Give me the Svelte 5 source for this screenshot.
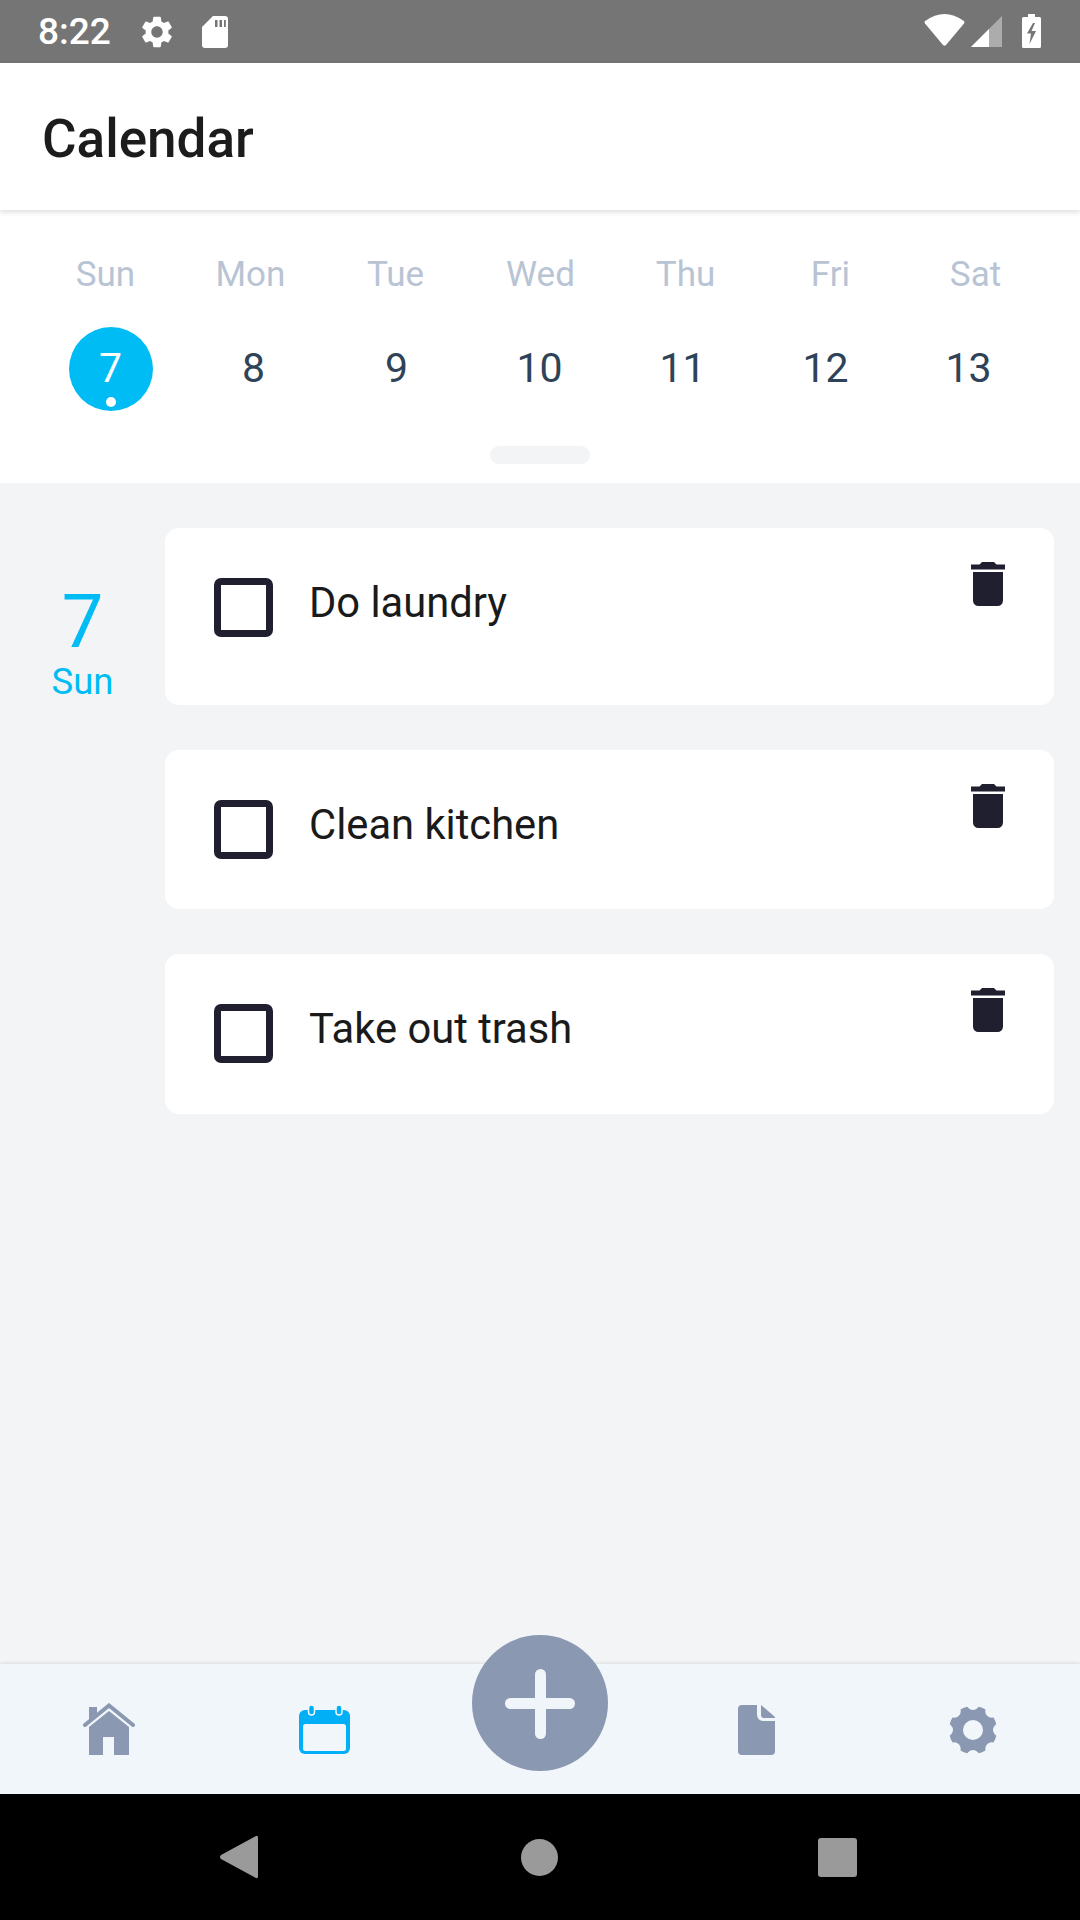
<script>
  const names = ['Sun', 'Mon', 'Tue', 'Wed', 'Thu', 'Fri', 'Sat'];
  const dates = [7, 8, 9, 10, 11, 12, 13];
  const tasks = ['Do laundry', 'Clean kitchen', 'Take out trash'];
  const notches = [0, 45, 90, 135, 180, 225, 270, 315];
  const gear = 'M19.14 12.94c.04-.3.06-.61.06-.94 0-.32-.02-.64-.07-.94l2.03-1.58c.18-.14.23-.41.12-.61l-1.92-3.32c-.12-.22-.37-.29-.59-.22l-2.39.96c-.5-.38-1.03-.7-1.62-.94l-.36-2.54c-.04-.24-.24-.41-.48-.41h-3.84c-.24 0-.43.17-.47.41l-.36 2.54c-.59.24-1.13.57-1.62.94l-2.39-.96c-.22-.08-.47 0-.59.22L2.74 8.87c-.12.21-.08.47.12.61l2.03 1.58c-.05.3-.09.63-.09.94s.02.64.07.94l-2.03 1.58c-.18.14-.23.41-.12.61l1.92 3.32c.12.22.37.29.59.22l2.39-.96c.5.38 1.03.7 1.62.94l.36 2.54c.05.24.24.41.48.41h3.84c.24 0 .44-.17.47-.41l.36-2.54c.59-.24 1.13-.56 1.62-.94l2.39.96c.22.08.47 0 .59-.22l1.92-3.32c.12-.22.07-.47-.12-.61l-2.01-1.58zM12 15.6c-1.98 0-3.6-1.62-3.6-3.6s1.62-3.6 3.6-3.6 3.6 1.62 3.6 3.6-1.62 3.6-3.6 3.6z';
</script>

<div class="screen">
  <div class="status">
    <span class="time">8:22</span>
    <svg class="st-gear" width="38" height="38" viewBox="0 0 24 24"><path fill="#fff" d={gear} /></svg>
    <svg class="st-sd" width="26" height="32" viewBox="0 0 26 32">
      <path fill="#fff" d="M11 0H23a3 3 0 0 1 3 3V29a3 3 0 0 1-3 3H3a3 3 0 0 1-3-3V11Z" />
      <path fill="#757575" d="M13 4h2.5v7H13zM17.5 4H20v7h-2.5zM22 4h1.8v7H22z" />
    </svg>
    <div class="st-right">
      <svg width="41" height="33" viewBox="0 0 41 33">
        <path fill="#fff" d="M19 31 L1 9.5 Q0 8 1.200 7 Q20.500 -7 39.800 7 Q41 8 40 9.500 L22 31 Q20.500 32.500 19 31Z" />
      </svg>
      <svg class="st-signal" width="31" height="33" viewBox="0 0 31 33">
        <path fill="#fff" fill-opacity="0.4" d="M31 2V33H0Z" />
        <path fill="#fff" d="M18 15V33H0Z" />
      </svg>
      <svg class="st-batt" width="19" height="34" viewBox="0 0 19 34">
        <path fill="#fff" d="M6 0h7v3h4.500A1.500 1.500 0 0 1 19 4.500V32.500A1.500 1.500 0 0 1 17.500 34H1.500A1.500 1.500 0 0 1 0 32.500V4.500A1.500 1.500 0 0 1 1.500 3H6Z" />
        <path fill="#757575" d="M11 9 5 19.500h4L7.500 30 14 17h-4.500L13 9Z" />
      </svg>
    </div>
  </div>

  <header class="appbar"><h1>Calendar</h1></header>

  <section class="week">
    <div class="names">
      {#each names as n}<span>{n}</span>{/each}
    </div>
    <div class="dates">
      {#each dates as d, i}
        <div class="cell">
          <span class="num" class:today={i === 0}>{d}{#if i === 0}<i class="dot"></i>{/if}</span>
        </div>
      {/each}
    </div>
    <div class="handle"></div>
  </section>

  <main class="agenda">
    <div class="day">
      <span class="day-num">7</span>
      <span class="day-name">Sun</span>
    </div>
    <div class="cards">
      {#each tasks as t}
        <article class="card">
          <span class="check"></span>
          <span class="label">{t}</span>
          <svg class="trash" width="34" height="44" viewBox="0 0 34 44">
            <path fill="#201f30" d="M11 0H23L25.500 2.500H34V7.500H0V2.500H8.500Z" />
            <path fill="#201f30" d="M2 10H32V38.500A5.500 5.500 0 0 1 26.500 44H7.500A5.500 5.500 0 0 1 2 38.500Z" />
          </svg>
        </article>
      {/each}
    </div>
  </main>

  <nav class="tabs">
    <div class="tab home-tab">
      <svg width="52" height="52" viewBox="0 0 52 52">
        <path fill="#8b98b2" d="M6 4H14V10L6 17Z" />
        <path fill="none" stroke="#8b98b2" stroke-width="4" stroke-linecap="round" d="M2 22 26 2.500 50 22" />
        <path fill="#8b98b2" d="M26 8 46 24V52H31V34H20V52H6V24Z" />
      </svg>
    </div>
    <div class="tab">
      <svg width="52" height="50" viewBox="0 0 52 50">
        <rect x="1" y="5" width="51" height="44" rx="6" fill="#00aff5" />
        <rect x="5" y="19" width="43" height="27" rx="2.500" fill="#f0f6fa" />
        <rect x="10.500" y="0" width="6" height="10" rx="3" fill="#00aff5" stroke="#f0f6fa" stroke-width="1.500" />
        <rect x="38" y="0" width="6" height="10" rx="3" fill="#00aff5" stroke="#f0f6fa" stroke-width="1.500" />
      </svg>
    </div>
    <div class="tab"></div>
    <div class="tab nudge">
      <svg width="38" height="50" viewBox="0 0 38 50">
        <path fill="#8b98b2" d="M4 0H19V10A6 6 0 0 0 25 16H37V46A4 4 0 0 1 33 50H4A4 4 0 0 1 0 46V4A4 4 0 0 1 4 0Z" />
        <path fill="#8b98b2" d="M23 0 37 12V13H26A3 3 0 0 1 23 10Z" />
      </svg>
    </div>
    <div class="tab nudge">
      <svg width="48" height="48" viewBox="-24 -24 48 48">
        <circle r="24" fill="#8b98b2" />
        {#each notches as a}
          <circle cx="0" cy="-26.500" r="6.500" fill="#f0f6fa" transform="rotate({a})" />
        {/each}
        <circle r="10" fill="#f0f6fa" />
      </svg>
    </div>
    <button class="fab" aria-label="Add"><span class="h"></span><span class="v"></span></button>
  </nav>

  <div class="sysnav">
    <svg width="38" height="44" viewBox="0 0 38 44"><path fill="#9a9a9a" d="M36 1Q38 0 38 3V41Q38 44 36 43L1 24Q-1 22 1 20Z" /></svg>
    <span class="home"></span>
    <span class="recent"></span>
  </div>
</div>

<style>
  :global(body) { margin: 0; background: #f3f4f6; }
  .screen {
    width: 1080px; height: 1920px; display: flex; flex-direction: column;
    font-family: Roboto, "Liberation Sans", sans-serif; overflow: hidden;
  }
  .status {
    height: 63px; flex: none; background: #757575; display: flex; align-items: flex-start;
    padding-left: 38px; box-sizing: border-box; color: #fff;
  }
  .time { font-size: 37px; line-height: 63px; font-weight: 500; width: 71px; letter-spacing: 0; }
  .st-gear { margin: 13px 0 0 29px; }
  .st-sd { margin: 16px 0 0 26px; }
  .st-right { margin-left: auto; padding: 14px 39px 0 0; display: flex; align-items: flex-start; }
  .st-signal { margin-left: 6px; }
  .st-batt { margin-left: 20px; }

  .appbar {
    height: 147px; flex: none; background: #fff; display: flex; align-items: center;
    padding: 4px 0 0 42px; box-sizing: border-box; position: relative; z-index: 1;
    box-shadow: 0 2px 5px rgba(0, 0, 0, 0.14);
  }
  h1 { margin: 0; font-size: 53px; font-weight: 500; color: #1c1c1c; }

  .week { flex: none; background: #fff; height: 273px; box-sizing: border-box; padding-top: 45px; }
  .names {
    display: grid; grid-template-columns: repeat(7, 145px); padding-left: 33px;
    font-size: 35px; line-height: 40px; color: #b8c4d4; text-align: center;
  }
  .dates {
    display: grid; grid-template-columns: repeat(7, 143px); padding-left: 39px; margin-top: 32px;
  }
  .cell { display: flex; justify-content: center; }
  .num {
    width: 84px; height: 84px; line-height: 82px; text-align: center; border-radius: 50%;
    font-size: 41px; color: #2e4358; position: relative;
  }
  .today { background: #00bcf5; color: #fff; }
  .dot {
    position: absolute; left: 37px; top: 70px; width: 10px; height: 10px; border-radius: 50%; background: #fff;
  }
  .handle { width: 100px; height: 18px; border-radius: 9px; background: #f3f4f6; margin: 35px auto 0; }

  .agenda {
    flex: 1; background: #f3f4f6; display: grid; grid-template-columns: 165px 889px;
    padding-top: 45px; align-content: start;
  }
  .day { display: flex; flex-direction: column; align-items: center; padding-top: 58px; color: #00bcf5; }
  .day-num { font-size: 74px; line-height: 72px; font-weight: 400; }
  .day-name { font-size: 36.500px; line-height: 42px; margin-top: 3px; }
  .cards { display: flex; flex-direction: column; gap: 45px; }
  .card {
    background: #fff; border-radius: 14px; display: flex; align-items: flex-start;
    padding: 0 49px; height: 160px; box-sizing: border-box;
  }
  .card:first-child { height: 177px; }
  .card:nth-child(2) { height: 159px; }
  .check {
    flex: none; width: 59px; height: 59px; box-sizing: border-box; border: 7px solid #201f30;
    border-radius: 7px; margin-top: 50px;
  }
  .label { font-size: 41.700px; line-height: 48px; color: #1a1a1a; margin: 51px 0 0 36px; flex: 1; }
  .trash { flex: none; margin-top: 34px; }

  .tabs {
    height: 130px; flex: none; background: #f0f6fa; display: grid; grid-template-columns: repeat(5, 216px);
    position: relative; box-shadow: 0 -1px 3px rgba(0, 0, 0, 0.1); align-items: center; justify-items: center;
    padding-top: 2px; box-sizing: border-box;
  }
  .tab { display: flex; align-items: center; justify-content: center; }
  .home-tab { margin: -2px 0 0 1px; }
  .nudge { margin-left: 2px; }
  .fab {
    position: absolute; left: 472px; top: -29px; width: 136px; height: 136px; border-radius: 50%;
    background: #8b98b2; border: 0; padding: 0;
  }
  .fab span { position: absolute; background: #f0f5f9; border-radius: 6px; }
  .h { left: 33px; top: 63px; width: 70px; height: 11px; }
  .v { left: 63px; top: 34px; width: 11px; height: 70px; }

  .sysnav {
    height: 126px; flex: none; background: #000; display: grid; padding-left: 220px;
    align-items: center; grid-template-columns: 301px 297px 39px;
  }
  .home { width: 37px; height: 37px; border-radius: 50%; background: #9a9a9a; }
  .recent { width: 39px; height: 39px; border-radius: 3px; background: #9a9a9a; }
</style>
